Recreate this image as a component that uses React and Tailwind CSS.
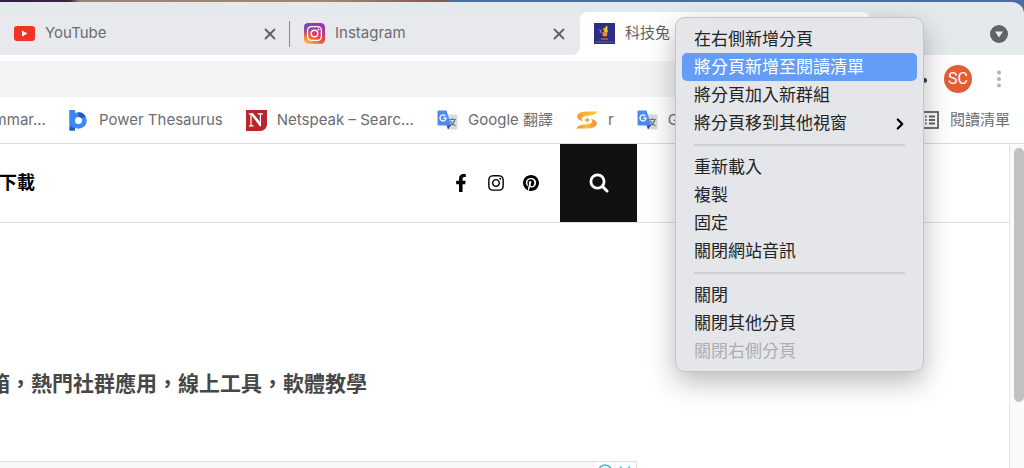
import React from 'react';
import { ChevronRight, X } from 'lucide-react';
import { FaFacebookF, FaInstagram, FaPinterest } from 'react-icons/fa';
import { MdExtension } from 'react-icons/md';

const MENU_GROUPS = [
  [
    { label: '在右側新增分頁' },
    { label: '將分頁新增至閱讀清單', active: true },
    { label: '將分頁加入新群組' },
    { label: '將分頁移到其他視窗', submenu: true },
  ],
  [{ label: '重新載入' }, { label: '複製' }, { label: '固定' }, { label: '關閉網站音訊' }],
  [{ label: '關閉' }, { label: '關閉其他分頁' }, { label: '關閉右側分頁', disabled: true }],
];

function YouTubeIcon() {
  return (
    <svg viewBox="0 0 21 15" className="w-[21px] h-[15px] shrink-0">
      <rect width="21" height="15" rx="3" fill="#f03324" />
      <path d="M8 4.6v5.8l5.4-2.9z" fill="#fff" />
    </svg>
  );
}

function InstagramIcon() {
  return (
    <svg viewBox="0 0 21 21" className="w-[21px] h-[21px] shrink-0">
      <defs>
        <linearGradient id="ig-base" x1="0.2" y1="1" x2="0.7" y2="0">
          <stop offset="0" stopColor="#fdc04f" />
          <stop offset="0.35" stopColor="#f0563a" />
          <stop offset="0.65" stopColor="#cf2f7c" />
          <stop offset="1" stopColor="#9138b8" />
        </linearGradient>
        <radialGradient id="ig-blue" cx="0.05" cy="0" r="0.65">
          <stop offset="0" stopColor="#3f5ae0" />
          <stop offset="1" stopColor="#6a45c8" stopOpacity="0" />
        </radialGradient>
      </defs>
      <rect width="21" height="21" rx="4.5" fill="url(#ig-base)" />
      <rect width="21" height="21" rx="4.5" fill="url(#ig-blue)" />
      <rect x="3.6" y="3.6" width="13.8" height="13.8" rx="3.8" fill="none" stroke="#fff" strokeWidth="1.4" />
      <circle cx="10.5" cy="10.5" r="3.3" fill="none" stroke="#fff" strokeWidth="1.4" />
      <circle cx="14.5" cy="6.5" r="0.9" fill="#fff" />
    </svg>
  );
}

function RabbitIcon() {
  return (
    <svg viewBox="0 0 21 21" className="w-[21px] h-[21px] shrink-0">
      <rect width="21" height="21" fill="#2b2e83" />
      <path d="M8.8 5.4l2.6-.6.4-2 1.8.6-.2 3 .6 2-1.2 1.2-2.6-.4-.2-1.8z" fill="#f0c030" />
      <path d="M8.4 8.6l2.4.8 2.6-.6-.4 4.4H8.8z" fill="#f0912a" />
      <path d="M5.6 6.4l1.6 3.8M7.6 6.4L6 9.6" stroke="#9aa0ca" strokeWidth="0.7" fill="none" />
      <path d="M7 16h7" stroke="#b05a38" strokeWidth="1.8" />
      <path d="M1.5 19h18" stroke="#8b8fc2" strokeWidth="0.7" strokeDasharray="2 0.7" />
    </svg>
  );
}

function PowerThesaurusIcon() {
  return (
    <svg viewBox="0 0 20 21" className="w-5 h-[21px] shrink-0">
      <path d="M.5 0H6v20.5H.5z" fill="#3279e8" />
      <path d="M.5 16.5l5.500 2v2H.5z" fill="#2258bd" />
      <circle cx="9.5" cy="10.5" r="8.3" fill="#3b8af5" />
      <path d="M9.5 2.2a8.3 8.3 0 0 1 7 4.200L12 8.500 9.500 6.500z" fill="#1f55c4" />
      <path d="M.5 0H6v9l-5.500 5z" fill="#3f86f0" />
      <circle cx="9.5" cy="10.5" r="3.5" fill="#fff" />
    </svg>
  );
}

function NetspeakIcon() {
  return (
    <svg viewBox="0 0 21 21" className="w-[21px] h-[21px] shrink-0">
      <path d="M0 0h21v14.5a6.5 6.5 0 0 1-6.5 6.5H0z" fill="#b8262d" />
      <path
        d="M2.8 3.8h4M5 4v11.5M3 15.800h4.600M11.700 3.800H17M14.400 4v12"
        fill="none"
        stroke="#fff"
        strokeWidth="1.2"
      />
      <path d="M4.2 3.5h3l7.600 9.600v3.200h-1z" fill="#fff" />
    </svg>
  );
}

function TranslateIcon() {
  return (
    <svg viewBox="0 0 21 20" className="w-[21px] h-5 shrink-0">
      <path d="M8 4.5h11A1.5 1.5 0 0 1 20.5 6v12a1.5 1.5 0 0 1-1.5 1.5h-8z" fill="#d8dadd" />
      <path
        d="M12 9.5h7M15.5 8v1.500M18 9.500c-.8 3-2.600 5-5 6.300M13.200 10.800c1.200 2.500 3 4.200 5.300 5"
        fill="none"
        stroke="#64798a"
        strokeWidth="1.1"
      />
      <path d="M9.5 15h4.700L11 19.500z" fill="#3043b8" />
      <path d="M1.7.5h7.800l4.700 15H1.700a1.200 1.200 0 0 1-1.200-1.200V1.700A1.200 1.200 0 0 1 1.700.5z" fill="#4f89f0" />
      <path d="M8.3 6A3 3 0 1 0 9 8.200H6.200" fill="none" stroke="#fff" strokeWidth="1.3" />
    </svg>
  );
}

function SwirlIcon() {
  return (
    <svg viewBox="0 0 22 18" className="w-[22px] h-[18px] shrink-0">
      <defs>
        <linearGradient id="swirl-top" x1="0" y1="0" x2="1" y2="0">
          <stop offset="0" stopColor="#f3a02f" />
          <stop offset="1" stopColor="#f6cf3d" />
        </linearGradient>
        <linearGradient id="swirl-bottom" x1="0" y1="0" x2="1" y2="0">
          <stop offset="0" stopColor="#ec8336" />
          <stop offset="0.5" stopColor="#f7c63c" />
          <stop offset="1" stopColor="#ee8a36" />
        </linearGradient>
      </defs>
      <path
        d="M21.5.3C16 .8 9-.2 4.500 1.500.5 3-.2 7 3.500 9c1.200.6 2.500.9 3.700 1C5 8.600 5.400 6 8.500 5.300 13 4.600 19 5 21.500.3z"
        fill="url(#swirl-top)"
      />
      <path
        d="M.3 17.700c5.500-.5 12.500.5 17-1.200 4-1.500 4.700-5.500 1-7.500-1.200-.6-2.300-.9-3.500-1 2 1.400 1.800 4-1.300 4.700C9 13.400 2.800 13 .3 17.700z"
        fill="url(#swirl-bottom)"
      />
      <path d="M11.200 5.800l.9 2.300 2.300.9-2.300.9-.9 2.300-.9-2.300L8 9l2.300-.9z" fill="#f2a034" />
    </svg>
  );
}

function ReadingListIcon() {
  return (
    <svg viewBox="0 0 20 20" className="w-5 h-5 shrink-0" fill="none" stroke="#5f6368" strokeWidth="1.8">
      <rect x="1" y="2" width="17" height="16" />
      <path d="M5 6.5h1.500M9 6.500h6M5 10h1.500M9 10h6M5 13.500h1.500M9 13.500h6" />
    </svg>
  );
}

function SearchIcon() {
  return (
    <svg viewBox="0 0 20 20" className="w-5 h-5" fill="none" stroke="#fff" strokeLinecap="round">
      <circle cx="8.5" cy="8.5" r="6.6" strokeWidth="2.8" />
      <path d="M13.5 13.5l4.500 4.500" strokeWidth="3" />
    </svg>
  );
}

function Tab({ icon, title, last }) {
  return (
    <div className="w-[290px] shrink-0 bg-white">
      <div className={`flex h-full items-center gap-[10px] bg-[#e8e9ed] pl-[14px] ${last ? 'rounded-br-lg' : ''}`}>
        {icon}
        <span className="flex-1 text-[15px] text-[#6a6d71]">{title}</span>
        <button aria-label="關閉分頁" className={last ? 'pr-3' : ''}>
          <X className="w-[18px] h-[18px] text-[#5f6368]" strokeWidth={2.5} />
        </button>
        {!last && <span className="h-[26px] w-px bg-[#85888c]" />}
      </div>
    </div>
  );
}

function TabStrip() {
  return (
    <div className="flex h-[53px] rounded-tr-xl bg-[#e4e9ec] pt-[10px]">
      <Tab icon={<YouTubeIcon />} title="YouTube" />
      <Tab icon={<InstagramIcon />} title="Instagram" last />
      <div className="flex w-[290px] shrink-0 items-center gap-[10px] rounded-t-lg bg-white pl-[14px]">
        <RabbitIcon />
        <span className="text-[15px] text-[#5f6368]">科技兔</span>
      </div>
      <div className="flex flex-1 items-center justify-end pr-4">
        <button aria-label="搜尋分頁">
          <svg viewBox="0 0 18 18" className="w-[18px] h-[18px]">
            <circle cx="9" cy="9" r="9" fill="#5f6368" />
            <path d="M5 6.5h8l-4 6z" fill="#e8eaed" />
          </svg>
        </button>
      </div>
    </div>
  );
}

function Toolbar() {
  return (
    <div className="flex h-[42px] shrink-0 items-center pt-[6px] pr-4">
      <input aria-label="網址列" className="mr-[72px] h-9 min-w-0 flex-1 rounded-r-full bg-[#f1f3f4]" />
      <button aria-label="擴充功能" className="pr-4">
        <MdExtension className="w-[22px] h-[22px] text-[#3c4043]" />
      </button>
      <button className="flex h-7 w-7 items-center justify-center rounded-full bg-[#e45c33] font-[Roboto,sans-serif] text-base text-white">
        SC
      </button>
      <button aria-label="選單" className="pl-[18px]">
        <svg viewBox="0 0 18 18" className="w-[18px] h-[18px]" fill="#b0b2b4">
          <circle cx="9" cy="2.5" r="2" />
          <circle cx="9" cy="9" r="2" />
          <circle cx="9" cy="15.5" r="2" />
        </svg>
      </button>
    </div>
  );
}

function Bookmark({ icon, label }) {
  return (
    <a href="#" className="flex shrink-0 items-center gap-[10px]">
      {icon}
      {label}
    </a>
  );
}

function BookmarksBar() {
  return (
    <div className="flex h-[47px] shrink-0 items-center justify-between border-b border-[#d9dadc] pr-[14px] text-[15px] text-[#6a6d71]">
      <div className="flex items-center gap-[23px]">
        <a href="#" className="flex w-[46px] justify-end overflow-hidden">
          mmar…
        </a>
        <Bookmark icon={<PowerThesaurusIcon />} label="Power Thesaurus" />
        <Bookmark icon={<NetspeakIcon />} label="Netspeak – Searc…" />
        <Bookmark icon={<TranslateIcon />} label="Google 翻譯" />
        <Bookmark icon={<SwirlIcon />} label="r" />
        <Bookmark icon={<TranslateIcon />} label="G" />
      </div>
      <Bookmark icon={<ReadingListIcon />} label="閱讀清單" />
    </div>
  );
}

function SiteHeader() {
  return (
    <header className="flex h-[79px] shrink-0 justify-between border-b border-[#dfdfdf] pr-[372px]">
      <a href="#" className="flex w-[35px] items-center justify-end overflow-hidden whitespace-nowrap text-lg font-bold text-black">
        下載
      </a>
      <div className="flex items-center">
        <div className="flex items-center gap-[19px] pr-[21px] text-black">
          <a href="#" aria-label="Facebook">
            <FaFacebookF className="w-4 h-[18px]" />
          </a>
          <a href="#" aria-label="Instagram">
            <FaInstagram className="w-4 h-[18px]" />
          </a>
          <a href="#" aria-label="Pinterest">
            <FaPinterest className="w-4 h-[18px]" />
          </a>
        </div>
        <button aria-label="搜尋" className="flex h-full w-[77px] items-center justify-center bg-[#111]">
          <SearchIcon />
        </button>
      </div>
    </header>
  );
}

function AdSlot() {
  return (
    <div className="mr-[372px] flex h-20 justify-end border-t border-r border-[#dfdfdf] bg-[#f8f8f8]">
      <svg viewBox="0 0 40 20" className="w-10 h-5" fill="none" stroke="#55b4d4" strokeWidth="1.5">
        <path d="M0 0h40v20H0z" fill="#fff" stroke="none" />
        <circle cx="9" cy="9.5" r="6.5" />
        <path d="M9 5.5v4" />
        <path d="M19.5 0v20" stroke="#eee" strokeWidth="1" />
        <path d="M24 4.5l10 10M34 4.5l-10 10" />
      </svg>
    </div>
  );
}

function ContextMenu() {
  return (
    <div
      role="menu"
      className="absolute top-[17px] left-[675px] w-[249px] rounded-[10px] border border-[#c3c5c8] bg-[#e5e6ea] px-[6px] pt-[7px] pb-[6px] text-[17px] text-[#222426] shadow-[0_10px_28px_rgba(0,0,0,0.28)]"
    >
      {MENU_GROUPS.map((group, idx) => (
        <React.Fragment key={idx}>
          {idx > 0 && <hr className="mx-3 my-[7px] border-t-2 border-[#cfd0d4]" />}
          {group.map((item) => (
            <button
              key={item.label}
              role="menuitem"
              disabled={item.disabled}
              className={`flex h-7 w-full items-center justify-between rounded-[5px] pt-[2px] pl-3 pr-2 ${
                item.active ? 'bg-[#639df8] text-white' : ''
              } ${item.disabled ? 'text-[#adaeb2]' : ''}`}
            >
              {item.label}
              {item.submenu && <ChevronRight className="w-[18px] h-[18px] text-black" strokeWidth={3} />}
            </button>
          ))}
        </React.Fragment>
      ))}
    </div>
  );
}

export default function App() {
  return (
    <div
      lang="zh-Hant"
      className="relative flex h-screen flex-col overflow-hidden bg-white font-[Inter,'Noto_Sans_CJK_TC',sans-serif]"
    >
      <div className="shrink-0 bg-[linear-gradient(90deg,#2d1c46_0,#3c2740_70px,#9c8474_80px,#a08570_330px,#7c5a52_445px,#4a6da8_452px)] pt-[2px]">
        <TabStrip />
      </div>
      <Toolbar />
      <BookmarksBar />
      <div className="flex min-h-0 flex-1">
        <main className="flex min-w-0 flex-1 flex-col overflow-hidden">
          <SiteHeader />
          <h1 className="mt-[145px] flex w-[367px] shrink-0 justify-end overflow-hidden whitespace-nowrap text-[21px] leading-8 font-bold text-[#474747]">
            箱，熱門社群應用，線上工具，軟體教學
          </h1>
          <div className="pt-[61px]">
            <AdSlot />
          </div>
        </main>
        <div className="w-[15px] border-l border-[#e6e6e6] bg-[#fafafa] pt-1 pl-1">
          <div className="h-[254px] w-[10px] rounded-full bg-[#c1c1c1]" />
        </div>
      </div>
      <ContextMenu />
    </div>
  );
}
